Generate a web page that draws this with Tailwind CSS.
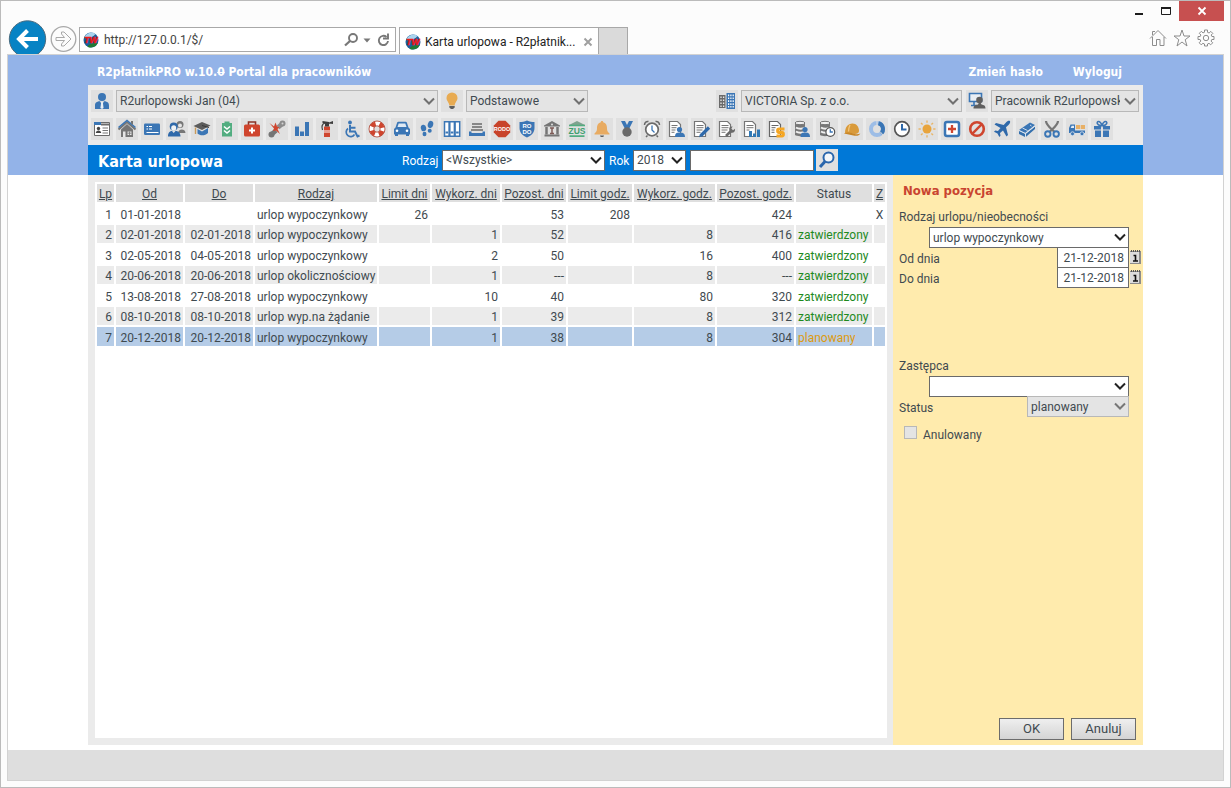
<!DOCTYPE html>
<html lang="pl">
<head>
    <meta charset="UTF-8">
    <meta name="viewport" content="width=device-width, initial-scale=1.0">
    <title>Karta urlopowa - R2płatnikPRO</title>
    <script src="https://cdn.jsdelivr.net/npm/@tailwindcss/browser@4"></script>
</head>
<body class="min-h-screen flex flex-col bg-[#fcfcfc] border border-[#bbbbbb] font-['Roboto','Liberation_Sans',sans-serif] text-[12px] leading-[18px] text-[#3f4a50]">

    <!-- browser bar -->
    <div class="h-[53px] shrink-0 flex justify-between pl-[7px] pr-[6px] overflow-hidden">
        <div class="flex pt-[19px]">
            <button aria-label="Wstecz" class="shrink-0 size-[39px]">
                <svg viewBox="0 0 39 39" class="size-[39px]"><circle cx="19.500" cy="19" r="18.200" fill="#0783c4" stroke="#4a6c80"/><path d="M30 19H12M19.500 10.500L11 19l8.500 8.500" fill="none" stroke="#fff" stroke-width="4"/></svg>
            </button>
            <button aria-label="Dalej" class="shrink-0 ml-[3px] size-[27px] mt-[6px]">
                <svg viewBox="0 0 27 27" class="size-[27px]" fill="none" stroke="#a9a9a9"><circle cx="13.500" cy="13" r="12.300" stroke-width="1.300"/><path d="M6 11.500h8.500L11.500 8v-2h2.500l7 7-7 7h-2.500v-2l3-3.500H6z"/></svg>
            </button>
            <div class="w-[317px] h-[25px] mt-[7px] ml-[2px] flex items-center bg-white border border-[#a8a8a8] pl-[3px] pr-[5px]">
                <svg viewBox="0 0 16 16" class="size-[16px] shrink-0"><circle cx="8" cy="8" r="7.500" fill="#1c5f9e"/><path d="M1.200 5.500A7.500 7.500 0 0 1 12.500 2C10 5.500 5 6.500 1.200 5.500z" fill="#a9d4ee"/><path d="M4.500 14.500c2-3.500 7-3.500 10.300-3.500A7.500 7.500 0 0 1 4.500 14.700z" fill="#1f7a35"/><text x="7.800" y="11" text-anchor="middle" font-family="Liberation Sans" font-size="8.500" font-weight="bold" font-style="italic" fill="#f01818" stroke="#f01818" stroke-width=".5">TW</text></svg>
                <input aria-label="Adres" value="http://127.0.0.1/$/" class="ml-[5px] w-0 flex-1 outline-none text-[#444]">
                <svg viewBox="0 0 50 16" class="w-[50px] h-[16px] shrink-0" fill="none" stroke="#787878"><circle cx="13" cy="6" r="4" stroke-width="1.900"/><path d="M10 9L5 13.500" stroke-width="2.300"/><path d="M23.500 6.500h7l-3.500 4z" fill="#787878" stroke="none"/><path d="M46.500 5A4.600 4.600 0 1 0 48 9" stroke-width="1.900"/><path d="M48 1.500v5h-5" stroke-width="1.900"/></svg>
            </div>
            <div class="w-[200px] h-[28px] mt-[7px] ml-[3px] flex items-center bg-white border border-b-0 border-[#a8a8a8] pl-[5px] pr-[5px]">
                <svg viewBox="0 0 16 16" class="size-[16px] shrink-0"><circle cx="8" cy="8" r="7.500" fill="#1c5f9e"/><path d="M1.200 5.500A7.500 7.500 0 0 1 12.500 2C10 5.500 5 6.500 1.200 5.500z" fill="#a9d4ee"/><path d="M4.500 14.500c2-3.500 7-3.500 10.300-3.500A7.500 7.500 0 0 1 4.500 14.700z" fill="#1f7a35"/><text x="7.800" y="11" text-anchor="middle" font-family="Liberation Sans" font-size="8.500" font-weight="bold" font-style="italic" fill="#f01818" stroke="#f01818" stroke-width=".5">TW</text></svg>
                <span class="ml-[4px] flex-1 whitespace-nowrap text-[#222]">Karta urlopowa - R2płatnik...</span>
                <button aria-label="Zamknij kartę"><svg viewBox="0 0 10 10" class="size-[10px]"><path d="M1.500 1.500l7 7M8.500 1.500l-7 7" stroke="#a0a0a0" stroke-width="2"/></svg></button>
            </div>
            <button aria-label="Nowa karta" class="w-[29px] h-[28px] mt-[7px] bg-[#dadada] border border-l-0 border-b-0 border-[#a8a8a8]"></button>
        </div>
        <div class="flex flex-col items-end">
            <div class="flex h-[20px]">
                <button aria-label="Minimalizuj" class="w-[27px]"><svg viewBox="0 0 27 20" class="w-[27px] h-[20px]"><path d="M10 13h8" stroke="#1c1c1c" stroke-width="2"/></svg></button>
                <button aria-label="Maksymalizuj" class="w-[27px]"><svg viewBox="0 0 27 20" class="w-[27px] h-[20px]"><path d="M9.500 6.500h9v7h-9z" fill="none" stroke="#1c1c1c"/><path d="M9 7h10" stroke="#1c1c1c" stroke-width="2"/></svg></button>
                <button aria-label="Zamknij" class="w-[45px] bg-[#c75050] flex justify-center items-center"><svg viewBox="0 0 10 10" class="size-[10px]"><path d="M1.500 1.500l7 7M8.500 1.500l-7 7" stroke="#fff" stroke-width="1.800"/></svg></button>
            </div>
            <div class="flex gap-[6px] mt-[8px] pr-[9px]">
                <svg viewBox="0 0 18 18" class="size-[18px]" fill="none" stroke="#8d8d8d"><path d="M1 9.500L9 1.500l8 8M3.500 8v8.500h4v-6h3.500v6h4V8M3.500 6V2.500H6"/></svg>
                <svg viewBox="0 0 18 18" class="size-[18px]" fill="none" stroke="#8d8d8d"><path d="M9 1l2 6h6l-4.800 3.700L14 17 9 13l-5 4 1.800-6.300L1 7h6z"/></svg>
                <svg viewBox="0 0 18 18" class="size-[18px]" fill="none" stroke="#8d8d8d"><path d="M7.500 1h3v2.300l1.600.7 1.700-1.600 2 2L14.200 6l.7 1.500H17v3h-2.200l-.7 1.600 1.600 1.700-2 2-1.700-1.500-1.500.7V17h-3v-2l-1.600-.7-1.700 1.500-2-2L3.800 12l-.7-1.500H1v-3h2.200L3.900 6 2.300 4.300l2-2L6 3.900l1.500-.7z"/><circle cx="9" cy="9" r="2.700"/></svg>
            </div>
        </div>
    </div>

    <!-- page -->
    <div class="flex-1 flex flex-col mx-[6px] mb-[6px] border border-[#d2d2d2] bg-white">
        <header class="px-20 bg-[#93b3e8]">
            <div class="h-[30px] flex items-center px-[9px] pt-[3px] font-['DejaVu_Sans_Condensed','DejaVu_Sans',sans-serif] font-bold text-white">
                <span>R2płatnikPRO w.10.<span class="line-through decoration-1">0</span> Portal dla pracowników</span>
                <nav class="ml-auto flex gap-[30px] pr-[12px]">
                    <a href="#">Zmień hasło</a>
                    <a href="#">Wyloguj</a>
                </nav>
            </div>

            <div class="bg-[#ebebeb] px-[3px] py-[5px]">
                <div class="flex items-center">
                    <span class="size-[22px] shrink-0 bg-[#e0e0e0]"><svg viewBox="0 0 22 22" class="size-[22px]"><circle cx="11" cy="7" r="4" fill="#3b76b5"/><path d="M4 19v-3.500c0-3 2-4 5-4.200L11 15l2-3.700c3 .2 5 1.200 5 4.200V19z" fill="#3b76b5"/><path d="M10.200 12h1.600l.8 6-1.600 1-1.600-1z" fill="#e8eef4"/></svg></span>
                    <div class="relative ml-[3px] w-[322px]">
                        <select aria-label="Pracownik" class="block w-full h-[22px] appearance-none bg-[#e4e4e4] border border-[#b8b8b8] pl-[3px]"><option>R2urlopowski Jan (04)</option></select>
                        <svg viewBox="0 0 12 8" class="absolute right-[3px] top-[7px] w-[12px] h-[8px] pointer-events-none"><path d="M1 1.500l5 5 5-5" fill="none" stroke="#707070" stroke-width="2"/></svg>
                    </div>
                    <span class="size-[22px] shrink-0 ml-[3px] bg-[#e0e0e0]"><svg viewBox="0 0 22 22" class="size-[22px]"><path d="M11 2.500a5.500 5.500 0 0 1 5.500 5.500c0 3-2.500 4-2.800 7.500H8.300C8 12 5.500 11 5.500 8A5.500 5.500 0 0 1 11 2.500z" fill="#e8ab52"/><path d="M8.300 16h5.400v1.500L12 19h-2l-1.700-1.500z" fill="#5f5f5f"/></svg></span>
                    <div class="relative ml-[3px] w-[122px]">
                        <select aria-label="Widok" class="block w-full h-[22px] appearance-none bg-[#e4e4e4] border border-[#b8b8b8] pl-[3px]"><option>Podstawowe</option></select>
                        <svg viewBox="0 0 12 8" class="absolute right-[3px] top-[7px] w-[12px] h-[8px] pointer-events-none"><path d="M1 1.500l5 5 5-5" fill="none" stroke="#707070" stroke-width="2"/></svg>
                    </div>
                    <span class="size-[22px] shrink-0 ml-auto bg-[#e0e0e0]"><svg viewBox="0 0 22 22" class="size-[22px]"><path d="M3 5h6.500v13H3z" fill="#6a6a6a"/><path d="M10.500 3H19v16h-8.500z" fill="#3b76b5"/><path d="M5 6.500V17M7.600 6.500V17" stroke="#e8e8e8" stroke-width="1.300" stroke-dasharray="1.600 1.400"/><path d="M12.600 4.500v13M14.900 4.500v13M17.200 4.500v13" stroke="#fff" stroke-width="1.200" stroke-dasharray="1.700 1.200"/></svg></span>
                    <div class="relative ml-[3px] w-[221px]">
                        <select aria-label="Firma" class="block w-full h-[22px] appearance-none bg-[#e4e4e4] border border-[#b8b8b8] pl-[3px]"><option>VICTORIA Sp. z o.o.</option></select>
                        <svg viewBox="0 0 12 8" class="absolute right-[3px] top-[7px] w-[12px] h-[8px] pointer-events-none"><path d="M1 1.500l5 5 5-5" fill="none" stroke="#707070" stroke-width="2"/></svg>
                    </div>
                    <span class="size-[22px] shrink-0 ml-[4px] bg-[#e0e0e0]"><svg viewBox="0 0 22 22" class="size-[22px]"><path d="M3.500 3.500h12v8h-12z" fill="#e9eef3" stroke="#3b76b5" stroke-width="1.600"/><path d="M5 15.500h6M8 12v3" stroke="#3b76b5" stroke-width="1.600"/><circle cx="13.500" cy="10" r="3.300" fill="#5f5f5f"/><path d="M7.500 18.500c0-3 2-3.500 4.500-4l1-2h1.500l1 2c2.500.5 4 1 4 4z" fill="#5f5f5f"/></svg></span>
                    <div class="relative ml-[3px] mr-[1px] w-[148px]">
                        <select aria-label="Rola" class="block w-full h-[22px] appearance-none bg-[#e4e4e4] border border-[#b8b8b8] pl-[3px] pr-[18px]"><option>Pracownik R2urlopowski</option></select>
                        <svg viewBox="0 0 12 8" class="absolute right-[3px] top-[7px] w-[12px] h-[8px] pointer-events-none"><path d="M1 1.500l5 5 5-5" fill="none" stroke="#707070" stroke-width="2"/></svg>
                    </div>
                </div>

                <div class="mt-[6px] flex flex-wrap gap-[3px] [&>button]:size-[22px] [&>button]:bg-[#e0e0e0] [&_svg]:size-[22px]">
                    <button aria-label="Dane osobowe"><svg viewBox="0 0 22 22"><path d="M3.500 4.500h15v13h-15z" fill="#fff" stroke="#6a6a6a"/><path d="M3 4h7v3H3z" fill="#3b76b5"/><path d="M10 6.500h8.500" stroke="#6a6a6a" stroke-width="2"/><circle cx="7.500" cy="10.500" r="1.700" fill="#444"/><path d="M4.800 15c0-3.500 5.400-3.500 5.400 0z" fill="#444"/><path d="M11.500 10h5.500M11.500 12.500h5.500M11.500 15h5.500" stroke="#777"/></svg></button>
                    <button aria-label="Adresy"><svg viewBox="0 0 22 22"><path d="M5 11.500l6-5.500 6 5.500V19H5z" fill="#757575"/><path d="M2.500 11.500L11 4l8.500 7.500" fill="none" stroke="#757575" stroke-width="2"/><path d="M2.500 9.500L11 2.500l8.500 7" fill="none" stroke="#3b76b5" stroke-width="1.600"/><path d="M15 3h2v4l-2-1.500z" fill="#757575"/><path d="M11.500 13.500h4V17h-4zM7 13.500h2.500V19H7z" fill="#e6e6e6"/><path d="M13.500 13.500V17M11.500 15.200h4" stroke="#757575" stroke-width=".8"/></svg></button>
                    <button aria-label="Karta"><svg viewBox="0 0 22 22"><rect x="3" y="5.500" width="16" height="11.500" rx="1.200" fill="#3b76b5"/><path d="M5.500 8.500H7M5.500 11H7M8 8.500h3M8 11h3M5.500 14.500h12" stroke="#fff" stroke-width="1.200"/></svg></button>
                    <button aria-label="Rodzina"><svg viewBox="0 0 22 22"><circle cx="14" cy="6.500" r="3.500" fill="#777"/><path d="M12 15c0-4 7-5 7.500 0z" fill="#777"/><circle cx="14" cy="7.500" r="2" fill="#e6e6e6"/><circle cx="7.700" cy="8.500" r="4" fill="#2f69aa"/><ellipse cx="7.700" cy="10" rx="2.500" ry="2.800" fill="#f0f2f4"/><path d="M2 18.500c0-4 2-5.500 4-5.500l1.700 2 1.800-2c2.500 0 5 1.500 5 5.500z" fill="#2f69aa"/></svg></button>
                    <button aria-label="Wykształcenie"><svg viewBox="0 0 22 22"><path d="M2.500 8L11 4l8.500 3.500L11 12z" fill="#5c5c5c"/><path d="M6.500 11l4.500 2.500 6-3.500v5c-3 3-8 3-10.500.5z" fill="#3b76b5"/><path d="M4.500 9.500V16" stroke="#c89a5a" stroke-width="1.400"/><path d="M11 7.500l7 2" stroke="#3a3a3a"/></svg></button>
                    <button aria-label="Badania"><svg viewBox="0 0 22 22"><path d="M6 5h10v13.500H6z" fill="#52ad80"/><path d="M8.500 3.500h5V6h-5z" fill="#52ad80"/><path d="M8 8.500l3 2.500 3-2.500M8 12.500l3 2.500 3-2.500" fill="none" stroke="#fff" stroke-width="1.600"/></svg></button>
                    <button aria-label="Apteczka"><svg viewBox="0 0 22 22"><path d="M7.500 7V4h7v3" fill="none" stroke="#8c3327" stroke-width="1.600"/><rect x="3" y="6.500" width="16" height="12" rx="1.500" fill="#cf452e"/><path d="M11 9.500v6M8 12.500h6" stroke="#fff" stroke-width="2"/></svg></button>
                    <button aria-label="Choroby"><svg viewBox="0 0 22 22"><circle cx="5.500" cy="16.500" r="3" fill="#757575"/><path d="M6 16L10 12.500" stroke="#757575" stroke-width="4.500"/><path d="M12 9.500l4-3.500" stroke="#8d8d8d" stroke-width="4.500"/><circle cx="16.500" cy="5.500" r="3" fill="#8d8d8d"/><circle cx="16.500" cy="5.500" r="1" fill="#d4d4d4"/><path d="M3.500 5l4.500 3.500 1.500-4 1.500 4 2.500 1-2 1.500 2.500 5-4-3.500-3 .5 1-2.500z" fill="#cf452e"/></svg></button>
                    <button aria-label="Statystyki"><svg viewBox="0 0 22 22"><path d="M4 8.500h4V18H4zM9 13.500h4V18H9zM14 4h4v14h-4z" fill="#3b76b5"/></svg></button>
                    <button aria-label="PPOŻ"><svg viewBox="0 0 22 22"><path d="M8 8.500h6V19H8z" fill="#cf452e"/><path d="M8 12h6v3H8z" fill="#e5a094"/><path d="M9 5.500h4v3H9zM6.500 3l6.500 1v2L6.500 5zM13 4.500l4-1.500v3l-4-.5z" fill="#3d3d3d"/><path d="M9 5C6 6 5.500 9 6.500 12" fill="none" stroke="#3d3d3d" stroke-width="1.200"/></svg></button>
                    <button aria-label="Niepełnosprawność"><svg viewBox="0 0 22 22" fill="none" stroke="#3b76b5" stroke-width="2"><circle cx="9" cy="4.500" r="1.900" fill="#3b76b5" stroke="none"/><path d="M9 7v6.500h5l2.500 5 2-1M9 9.700h5.500"/><path d="M7 10.500a4.500 4.500 0 1 0 6.500 6" stroke-width="1.700"/></svg></button>
                    <button aria-label="Ubezpieczenia"><svg viewBox="0 0 22 22"><circle cx="11" cy="11" r="5.600" fill="none" stroke="#fff" stroke-width="4.500"/><circle cx="11" cy="11" r="5.600" fill="none" stroke="#cf452e" stroke-width="4.500" stroke-dasharray="4.600 4.200" stroke-dashoffset="-2"/><circle cx="11" cy="11" r="8" fill="none" stroke="#b03c2a" stroke-width=".8"/><circle cx="11" cy="11" r="3.200" fill="none" stroke="#b03c2a" stroke-width=".8"/></svg></button>
                    <button aria-label="Pojazdy"><svg viewBox="0 0 22 22"><path d="M3 11l1.500-1.500L6 5c.3-1 1-1.200 2-1.200h6c1 0 1.700.2 2 1.200l1.500 4.500L19 11v5.500h-1V18h-3v-1.500H7V18H4v-1.500H3z" fill="#3b76b5"/><path d="M6.500 9l1.200-3.500h6.600L15.500 9z" fill="#dfe9f3"/><circle cx="6" cy="12.800" r="1.300" fill="#fff"/><circle cx="16" cy="12.800" r="1.300" fill="#fff"/></svg></button>
                    <button aria-label="Obecności"><svg viewBox="0 0 22 22" fill="#3b76b5"><ellipse cx="7.500" cy="10" rx="2.700" ry="3.300" transform="rotate(-10 7.500 10)"/><ellipse cx="14.500" cy="6.500" rx="2.700" ry="3.700" transform="rotate(15 14.500 6.500)"/><ellipse cx="8.500" cy="16" rx="2" ry="2.200"/><ellipse cx="13.700" cy="12.700" rx="2" ry="2"/></svg></button>
                    <button aria-label="Teczki"><svg viewBox="0 0 22 22" fill="#fff" stroke="#3b76b5" stroke-width="1.500"><path d="M3.500 3.700h4.600v14.600H3.500zM8.800 3.700h4.600v14.600H8.800zM14.100 3.700h4.600v14.600h-4.600z"/><path d="M4.500 14.500h2.600M9.800 14.500h2.600M15.100 14.500h2.600" stroke-width="2"/></svg></button>
                    <button aria-label="Dokumenty"><svg viewBox="0 0 22 22"><path d="M6 6h10M6 9h10M5 12h12" stroke="#6a6a6a" stroke-width="1.700"/><path d="M3 13.500h2.500V15h11v-1.500H19V18H3z" fill="#3b76b5"/></svg></button>
                    <button aria-label="RODO"><svg viewBox="0 0 22 22"><path d="M7.500 2.800h7L19.200 7.500v7l-4.700 4.700h-7L2.800 14.500v-7z" fill="#c8432a"/><text x="11" y="13.300" text-anchor="middle" font-family="Liberation Sans" font-size="5.500" font-weight="bold" fill="#fff">RODO</text></svg></button>
                    <button aria-label="RODO zgody"><svg viewBox="0 0 22 22"><path d="M11 2.500c2.500 1.500 5 1.500 7.500 1.500v6c0 5-3.500 7.500-7.500 9.500-4-2-7.500-4.500-7.500-9.500V4c2.500 0 5 0 7.500-1.500z" fill="#3b76b5"/><text x="11" y="10" text-anchor="middle" font-family="Liberation Sans" font-size="6" font-weight="bold" fill="#fff">RO</text><text x="11" y="15.500" text-anchor="middle" font-family="Liberation Sans" font-size="6" font-weight="bold" fill="#fff">DO</text></svg></button>
                    <button aria-label="Urzędy"><svg viewBox="0 0 22 22"><path d="M3 7.500L11 3l8 4.500v1H3zM3.500 16.500h15v2h-15z" fill="#757575"/><path d="M5.500 9v7.500M16.500 9v7.500" stroke="#757575" stroke-width="2.500"/><path d="M9 10h4M9 15.500h4M11 9.500v6" stroke="#7d5a55" stroke-width="1.500"/><circle cx="11" cy="6.500" r="1" fill="#e0e0e0"/></svg></button>
                    <button aria-label="ZUS"><svg viewBox="0 0 22 22"><path d="M3 7L11 3l8 4v1H3z" fill="#7fa38f"/><path d="M3 7.500h16M3.500 18.200h15" stroke="#52ad80" stroke-width="1.700"/><text x="11" y="16.200" text-anchor="middle" font-family="Liberation Sans" font-size="8.500" font-weight="bold" fill="#3f9f70">ZUS</text></svg></button>
                    <button aria-label="Powiadomienia"><svg viewBox="0 0 22 22"><path d="M11 3c.8 0 1.200.5 1.200 1.200C15.500 5 16 8 16 10.500c0 2.500 1 3.500 2.500 5v1h-15v-1c1.500-1.500 2.500-2.500 2.500-5C6 8 6.500 5 9.800 4.200 9.800 3.500 10.200 3 11 3z" fill="#e8ab62"/><path d="M9 17.500h4c0 2-4 2-4 0z" fill="#5f5f5f"/></svg></button>
                    <button aria-label="Nagrody"><svg viewBox="0 0 22 22"><path d="M5 3h4l2 4 2-4h4l-3.500 7h-5z" fill="#3b76b5"/><circle cx="11" cy="14" r="4.700" fill="#6a6a6a"/></svg></button>
                    <button aria-label="Terminy"><svg viewBox="0 0 22 22"><circle cx="11" cy="11.500" r="6.300" fill="#fff" stroke="#6a6a6a" stroke-width="1.700"/><path d="M3.500 7c0-2.500 2-4 4-3.500M18.500 7c0-2.500-2-4-4-3.500" fill="none" stroke="#6a6a6a" stroke-width="1.500"/><path d="M6.500 17.500L5 19M15.500 17.500L17 19" stroke="#6a6a6a" stroke-width="1.500"/><path d="M11 7.500v4.500l2.500 2.500" fill="none" stroke="#3b76b5" stroke-width="1.300"/></svg></button>
                    <button aria-label="Umowy"><svg viewBox="0 0 22 22"><path d="M3.500 3.500h8l3 3v12h-11z" fill="#fff" stroke="#757575" stroke-width="1.200"/><path d="M5.500 7.500h6M5.500 9.700h5M5.500 12h4M5.500 14.300h3" stroke="#757575"/><circle cx="13.500" cy="11.500" r="2.600" fill="#3b76b5"/><path d="M9 19c0-4 2-4.500 4.500-4.500S19 15 19 19z" fill="#3b76b5"/></svg></button>
                    <button aria-label="Wnioski"><svg viewBox="0 0 22 22"><path d="M3.500 3.500h8l3 3v12h-11z" fill="#fff" stroke="#757575" stroke-width="1.200"/><path d="M5.500 7.500h7M5.500 9.700h7M5.500 12h6M5.500 14.300h4" stroke="#757575"/><path d="M10 17.500L18 9.500" stroke="#2f69aa" stroke-width="3.200"/><path d="M8 19.300l1-3.500 2.500 2.500z" fill="#2f69aa"/></svg></button>
                    <button aria-label="Narzędzia"><svg viewBox="0 0 22 22"><path d="M3.500 3.500h8l3 3v12h-11z" fill="#fff" stroke="#757575" stroke-width="1.200"/><path d="M5.500 7.500h7M5.500 9.700h7M5.500 12h6M5.500 14.300h4" stroke="#757575"/><path d="M10 18l5-5" stroke="#6a6a6a" stroke-width="2.700"/><path d="M13.500 9.500c1-1 2.500-1.200 3.200-.9L15.300 10.500l1.700 1.700 2-1.500c.5 3-2 5-4.200 3.800-1.500-1-2-3.300-1.300-5z" fill="#6a6a6a"/></svg></button>
                    <button aria-label="Raporty"><svg viewBox="0 0 22 22"><path d="M3.500 3.500h8l3 3v12h-11z" fill="#fff" stroke="#757575" stroke-width="1.200"/><path d="M5.500 7.500h7M5.500 9.700h7M5.500 12h3" stroke="#757575"/><path d="M8 13h3v6H8zM12 15.500h3V19h-3zM16 11.500h3V19h-3z" fill="#2f78b5"/></svg></button>
                    <button aria-label="Płace"><svg viewBox="0 0 22 22"><path d="M3.500 3.500h8l3 3v12h-11z" fill="#fff" stroke="#666" stroke-width="1.200"/><path d="M5.500 7.500h7M5.500 9.700h4M5.500 12h3M5.500 14.300h3" stroke="#666"/><path d="M18.500 11H13c-2 0-2 3.500 0 3.500h3c2 0 2 3.500 0 3.500H10.500" fill="none" stroke="#f5a623" stroke-width="2.800"/></svg></button>
                    <button aria-label="Baza pracowników"><svg viewBox="0 0 22 22"><path d="M4 5v12c1.500 1.500 8.500 1.500 10 0V5z" fill="#777"/><ellipse cx="9" cy="5" rx="5" ry="1.700" fill="#f0f0f0" stroke="#777"/><path d="M5 9.500c2 1.500 7 1.500 9 0M5 13.500c2 1.500 7 1.500 9 0" fill="none" stroke="#f0f0f0" stroke-width="2"/><circle cx="14" cy="11.500" r="2.600" fill="#3b76b5"/><path d="M9.500 19c0-4 2-4.500 4.500-4.500S19 15 19 19z" fill="#3b76b5"/></svg></button>
                    <button aria-label="Historia"><svg viewBox="0 0 22 22"><path d="M4 5v12c1.500 1.500 8.500 1.500 10 0V5z" fill="#777"/><ellipse cx="9" cy="5" rx="5" ry="1.700" fill="#f0f0f0" stroke="#777"/><path d="M5 9.500c2 1.500 7 1.500 9 0M5 13.500c2 1.500 7 1.500 9 0" fill="none" stroke="#f0f0f0" stroke-width="2"/><circle cx="14.300" cy="14" r="4.400" fill="#fff" stroke="#555" stroke-width="1.200"/><path d="M14.300 11.200V14h2.500" fill="none" stroke="#3b76b5" stroke-width="1.300"/></svg></button>
                    <button aria-label="BHP"><svg viewBox="0 0 22 22"><path d="M4 15c0-6 3-9.500 7.500-9.500 4 0 6.500 3.500 6.500 7.500 0 2-2 3-4 3z" fill="#d99a3a"/><path d="M2.800 15.500c4-2 8-.5 11 .5 2 .7 4 .3 5.500-.5-1 2.500-4 2.500-7 2-3-.6-6-1.500-9.500-2z" fill="#c88628"/><path d="M9 7c-1 2-1.500 4-1.500 6.500" fill="none" stroke="#f2c67c" stroke-width="1.300"/></svg></button>
                    <button aria-label="Wykres"><svg viewBox="0 0 22 22" fill="none" stroke-width="4"><circle cx="11" cy="11" r="6" stroke="#9dbde6"/><path d="M12.500 5.200A6 6 0 0 1 15 15.500" stroke="#3b76b5"/><path d="M11 2v5M14 13.500l3.500 4" stroke="#e0e0e0" stroke-width="1"/></svg></button>
                    <button aria-label="Czas pracy"><svg viewBox="0 0 22 22"><circle cx="11" cy="11" r="7.300" fill="#fff" stroke="#555" stroke-width="1.700"/><path d="M11 6v5.500h4.500" fill="none" stroke="#2f69aa" stroke-width="2"/></svg></button>
                    <button aria-label="Urlopy"><svg viewBox="0 0 22 22"><circle cx="11" cy="11" r="4.500" fill="#e8a43c"/><path d="M11 2.500v2.300M11 17.200v2.300M2.500 11h2.300M17.200 11h2.300M5 5l1.600 1.600M15.400 15.400L17 17M5 17l1.600-1.600M15.400 6.600L17 5" stroke="#e9b568" stroke-width="1.400"/></svg></button>
                    <button aria-label="Zwolnienia"><svg viewBox="0 0 22 22"><rect x="4" y="4" width="14" height="14" rx="2" fill="#fff" stroke="#3b76b5" stroke-width="2.500"/><path d="M11 7v8M7 11h8" stroke="#cf452e" stroke-width="2.300"/></svg></button>
                    <button aria-label="Blokady"><svg viewBox="0 0 22 22"><circle cx="11" cy="11" r="6.800" fill="none" stroke="#cf452e" stroke-width="2.600"/><path d="M15.800 6.200l-9.600 9.600" stroke="#cf452e" stroke-width="2.400"/></svg></button>
                    <button aria-label="Delegacje"><svg viewBox="0 0 22 22"><path d="M19 3c-1.500-.5-2.800.2-4 1.500L12.700 7 5 5 3.500 6.500l6 3.500L7 13l-2.800-.5L3 13.700l3.500 1.800L8.300 19l1.200-1.200L9 15l3-2.500 3.500 6L17 17l-2-7.700L17.500 7C18.800 5.800 19.500 4.500 19 3z" fill="#2f69aa"/></svg></button>
                    <button aria-label="Kasa"><svg viewBox="0 0 22 22"><path d="M3 12l11-7.500 5 2.500-10 8z" fill="#3b76b5"/><path d="M3 12.800l6 3V19l-6-3zM9.800 15.800L19 8.500V11l-9.200 8z" fill="#3570ad"/><path d="M9.500 16V19M3 12.500l6.500 3L19 8M6.500 10l5 2.500M14 7l1.500 1" fill="none" stroke="#dbe7f3" stroke-width=".9"/></svg></button>
                    <button aria-label="Potrącenia"><svg viewBox="0 0 22 22"><path d="M5 3c0 4 5 7.500 8.500 11M17 3c0 4-5 7.500-8.500 11" fill="none" stroke="#757575" stroke-width="2.200"/><circle cx="6.800" cy="16" r="2.700" fill="none" stroke="#3b76b5" stroke-width="1.900"/><circle cx="15.200" cy="16" r="2.700" fill="none" stroke="#3b76b5" stroke-width="1.900"/></svg></button>
                    <button aria-label="Transport"><svg viewBox="0 0 22 22"><path d="M3 10l1.500-3.500h4.500V15H3z" fill="#3b76b5"/><path d="M4.700 10l1-2.300H8V10z" fill="#e4ecf4"/><path d="M10 7h4v4h-4zM14.700 7H19v4h-4.300z" fill="#e8b066"/><path d="M9 12.500H19V15H9z" fill="#3b76b5"/><circle cx="6.500" cy="15.800" r="2" fill="#3b76b5" stroke="#dfe6ee" stroke-width=".8"/><circle cx="16" cy="15.800" r="2" fill="#3b76b5" stroke="#dfe6ee" stroke-width=".8"/></svg></button>
                    <button aria-label="Świadczenia"><svg viewBox="0 0 22 22"><path d="M3 8h7v3.500H3zM12 8h7v3.500h-7zM4 12.500h6V19H4zM12 12.500h6V19h-6z" fill="#3b76b5"/><path d="M10.500 7.500C6 8 5 3.500 7.500 3.500c2 0 3 2.500 3.500 4 .5-1.500 1.500-4 3.500-4 2.500 0 1.500 4.500-3 4" fill="none" stroke="#3b76b5" stroke-width="1.500"/></svg></button>
                </div>
            </div>

            <div class="h-[30px] flex items-center bg-[#0078d7] text-white">
                <h1 class="w-[314px] pl-[10px] pt-[3px] font-['DejaVu_Sans_Condensed','DejaVu_Sans',sans-serif] font-bold text-[16px]">Karta urlopowa</h1>
                <label for="kind" class="w-[40px] pt-[2px]">Rodzaj</label>
                <div class="relative w-[163px] text-[#3f4a50]">
                    <select id="kind" class="block w-full h-[21px] appearance-none bg-white border border-[#6a6a6a] pl-[3px]"><option>&lt;Wszystkie&gt;</option></select>
                    <svg viewBox="0 0 12 8" class="absolute right-[3px] top-[6px] w-[12px] h-[8px] pointer-events-none"><path d="M1 1.500l5 5 5-5" fill="none" stroke="#222" stroke-width="2"/></svg>
                </div>
                <label for="year" class="ml-[4px] w-[24px] pt-[2px]">Rok</label>
                <div class="relative w-[53px] text-[#3f4a50]">
                    <select id="year" class="block w-full h-[21px] appearance-none bg-white border border-[#6a6a6a] pl-[3px]"><option>2018</option></select>
                    <svg viewBox="0 0 12 8" class="absolute right-[3px] top-[6px] w-[12px] h-[8px] pointer-events-none"><path d="M1 1.500l5 5 5-5" fill="none" stroke="#222" stroke-width="2"/></svg>
                </div>
                <input type="text" aria-label="Szukaj" class="ml-[4px] w-[124px] h-[21px] bg-white border border-[#6a6a6a] px-[3px] text-[#3f4a50]">
                <button aria-label="Szukaj" class="ml-[2px] size-[22px] bg-[#e0e0e0]"><svg viewBox="0 0 22 22" class="size-[22px]"><circle cx="12.500" cy="8.500" r="5" fill="#f4f7fa" stroke="#2a66ac" stroke-width="2"/><path d="M9 12.500L4 18" stroke="#2a66ac" stroke-width="3"/></svg></button>
            </div>
        </header>

        <main class="flex-1 flex px-20 mb-[5px]">
            <div class="flex-1 bg-[#ebebeb] pl-[7px] pr-[6px] py-[7px] flex">
                <div class="flex-1 bg-white">
                    <table class="w-full table-fixed border-separate border-spacing-[2px] whitespace-nowrap [&_td]:px-[2px] [&_th]:px-0 [&_th]:pb-0 [&_th]:pt-[2px] [&_th]:leading-[16px] [&_th]:font-normal [&_th]:bg-[#dfdfdf] [&_th]:h-[18px] [&_td]:pt-[2px] [&_td]:pb-0 [&_td]:leading-[16px] [&_a]:underline">
                        <thead>
                            <tr>
                                <th class="w-[17px]"><a href="#">Lp</a></th>
                                <th class="w-[67px]"><a href="#">Od</a></th>
                                <th class="w-[68px]"><a href="#">Do</a></th>
                                <th class="w-[122px]"><a href="#">Rodzaj</a></th>
                                <th class="w-[51px]"><a href="#">Limit dni</a></th>
                                <th class="w-[68px]"><a href="#">Wykorz. dni</a></th>
                                <th class="w-[64px]"><a href="#">Pozost. dni</a></th>
                                <th class="w-[64px]"><a href="#">Limit godz.</a></th>
                                <th class="w-[81px]"><a href="#">Wykorz. godz.</a></th>
                                <th class="w-[77px]"><a href="#">Pozost. godz.</a></th>
                                <th class="w-[76px]">Status</th>
                                <th class="w-[11px]"><a href="#">Z</a></th>
                            </tr>
                        </thead>
                        <tbody class="text-right [&>tr:nth-child(odd)]:h-[19px] [&>tr:nth-child(even)]:h-[18px] [&>tr:nth-child(even)]:bg-[#ebebeb] [&_td:nth-child(4)]:text-left [&_td:nth-child(11)]:text-left [&_td:nth-child(11)]:text-[#1e8a1e] [&_td:nth-child(12)]:px-0 [&_td:nth-child(12)]:text-center">
                            <tr><td>1</td><td>01-01-2018</td><td></td><td>urlop wypoczynkowy</td><td>26</td><td></td><td>53</td><td>208</td><td></td><td>424</td><td></td><td>X</td></tr>
                            <tr><td>2</td><td>02-01-2018</td><td>02-01-2018</td><td>urlop wypoczynkowy</td><td></td><td>1</td><td>52</td><td></td><td>8</td><td>416</td><td>zatwierdzony</td><td></td></tr>
                            <tr><td>3</td><td>02-05-2018</td><td>04-05-2018</td><td>urlop wypoczynkowy</td><td></td><td>2</td><td>50</td><td></td><td>16</td><td>400</td><td>zatwierdzony</td><td></td></tr>
                            <tr><td>4</td><td>20-06-2018</td><td>20-06-2018</td><td>urlop okolicznościowy</td><td></td><td>1</td><td>---</td><td></td><td>8</td><td>---</td><td>zatwierdzony</td><td></td></tr>
                            <tr><td>5</td><td>13-08-2018</td><td>27-08-2018</td><td>urlop wypoczynkowy</td><td></td><td>10</td><td>40</td><td></td><td>80</td><td>320</td><td>zatwierdzony</td><td></td></tr>
                            <tr><td>6</td><td>08-10-2018</td><td>08-10-2018</td><td>urlop wyp.na żądanie</td><td></td><td>1</td><td>39</td><td></td><td>8</td><td>312</td><td>zatwierdzony</td><td></td></tr>
                            <tr class="bg-[#b5cce7]"><td>7</td><td>20-12-2018</td><td>20-12-2018</td><td>urlop wypoczynkowy</td><td></td><td>1</td><td>38</td><td></td><td>8</td><td>304</td><td><span class="text-[#dd9a10]">planowany</span></td><td></td></tr>
                        </tbody>
                    </table>
                </div>
            </div>

            <form class="w-[250px] shrink-0 flex flex-col bg-[#ffebad] pl-[6px]">
                <h2 class="h-[30px] leading-[32px] pl-[4px] font-['DejaVu_Sans_Condensed','DejaVu_Sans',sans-serif] font-bold text-[13px] text-[#c94430]">Nowa pozycja</h2>
                <label for="type" class="h-[22px] leading-[24px]">Rodzaj urlopu/nieobecności</label>
                <div class="relative ml-[30px] w-[200px]">
                    <select id="type" class="block w-full h-[21px] appearance-none bg-white border border-[#6a6a6a] pl-[3px]"><option>urlop wypoczynkowy</option></select>
                    <svg viewBox="0 0 12 8" class="absolute right-[3px] top-[6px] w-[12px] h-[8px] pointer-events-none"><path d="M1 1.500l5 5 5-5" fill="none" stroke="#222" stroke-width="2"/></svg>
                </div>
                <div class="flex items-center -mt-px">
                    <label for="from" class="w-[158px] pt-[2px]">Od dnia</label>
                    <input id="from" type="text" value="21-12-2018" class="w-[72px] h-[21px] bg-white border border-[#6a6a6a] pr-[4px] text-right">
                    <button type="button" aria-label="Kalendarz od" class="ml-[1px]"><svg viewBox="0 0 11 15" class="w-[11px] h-[15px]"><path d="M0 1h11v13H0z" fill="#8c8c8c"/><path d="M0 2h9v11H0z" fill="#dcdcdc"/><path d="M1 1h10" stroke="#555" stroke-width="2" stroke-dasharray="1 1"/><path d="M3.500 5.500h2V11M3 11h5" fill="none" stroke="#111" stroke-width="1.600"/></svg></button>
                </div>
                <div class="flex items-center -mt-px">
                    <label for="to" class="w-[158px] pt-[2px]">Do dnia</label>
                    <input id="to" type="text" value="21-12-2018" class="w-[72px] h-[21px] bg-white border border-[#6a6a6a] pr-[4px] text-right">
                    <button type="button" aria-label="Kalendarz do" class="ml-[1px]"><svg viewBox="0 0 11 15" class="w-[11px] h-[15px]"><path d="M0 1h11v13H0z" fill="#8c8c8c"/><path d="M0 2h9v11H0z" fill="#dcdcdc"/><path d="M1 1h10" stroke="#555" stroke-width="2" stroke-dasharray="1 1"/><path d="M3.500 5.500h2V11M3 11h5" fill="none" stroke="#111" stroke-width="1.600"/></svg></button>
                </div>
                <label for="substitute" class="mt-[66px] h-[22px] leading-[24px]">Zastępca</label>
                <div class="relative ml-[30px] w-[200px]">
                    <select id="substitute" class="block w-full h-[21px] appearance-none bg-white border border-[#6a6a6a] pl-[3px]"><option></option></select>
                    <svg viewBox="0 0 12 8" class="absolute right-[3px] top-[6px] w-[12px] h-[8px] pointer-events-none"><path d="M1 1.500l5 5 5-5" fill="none" stroke="#222" stroke-width="2"/></svg>
                </div>
                <div class="flex items-center -mt-px">
                    <label for="status" class="w-[128px] pt-[2px]">Status</label>
                    <div class="relative w-[102px]">
                        <select id="status" disabled class="block w-full h-[21px] appearance-none bg-[#e4e4e4] border border-[#b8b8b8] pl-[3px] opacity-100"><option>planowany</option></select>
                        <svg viewBox="0 0 12 8" class="absolute right-[3px] top-[6px] w-[12px] h-[8px] pointer-events-none"><path d="M1 1.500l5 5 5-5" fill="none" stroke="#777" stroke-width="2"/></svg>
                    </div>
                </div>
                <label class="flex mt-[9px] pl-[5px]">
                    <input type="checkbox" disabled class="appearance-none size-[13px] bg-[#e4e4e4] border border-[#b8b8b8]">
                    <span class="ml-[6px]">Anulowany</span>
                </label>
                <div class="mt-auto flex justify-end gap-[7px] pr-[7px] pb-[5px]">
                    <button type="button" class="w-[65px] h-[22px] border border-[#6c6c6c] bg-linear-to-b from-[#efefef] to-[#d4d4d4] text-[13px]">OK</button>
                    <button type="button" class="w-[65px] h-[22px] border border-[#6c6c6c] bg-linear-to-b from-[#efefef] to-[#d4d4d4] text-[13px]">Anuluj</button>
                </div>
            </form>
        </main>

        <footer class="h-[30px] bg-[#dedede]"></footer>
    </div>
</body>
</html>
